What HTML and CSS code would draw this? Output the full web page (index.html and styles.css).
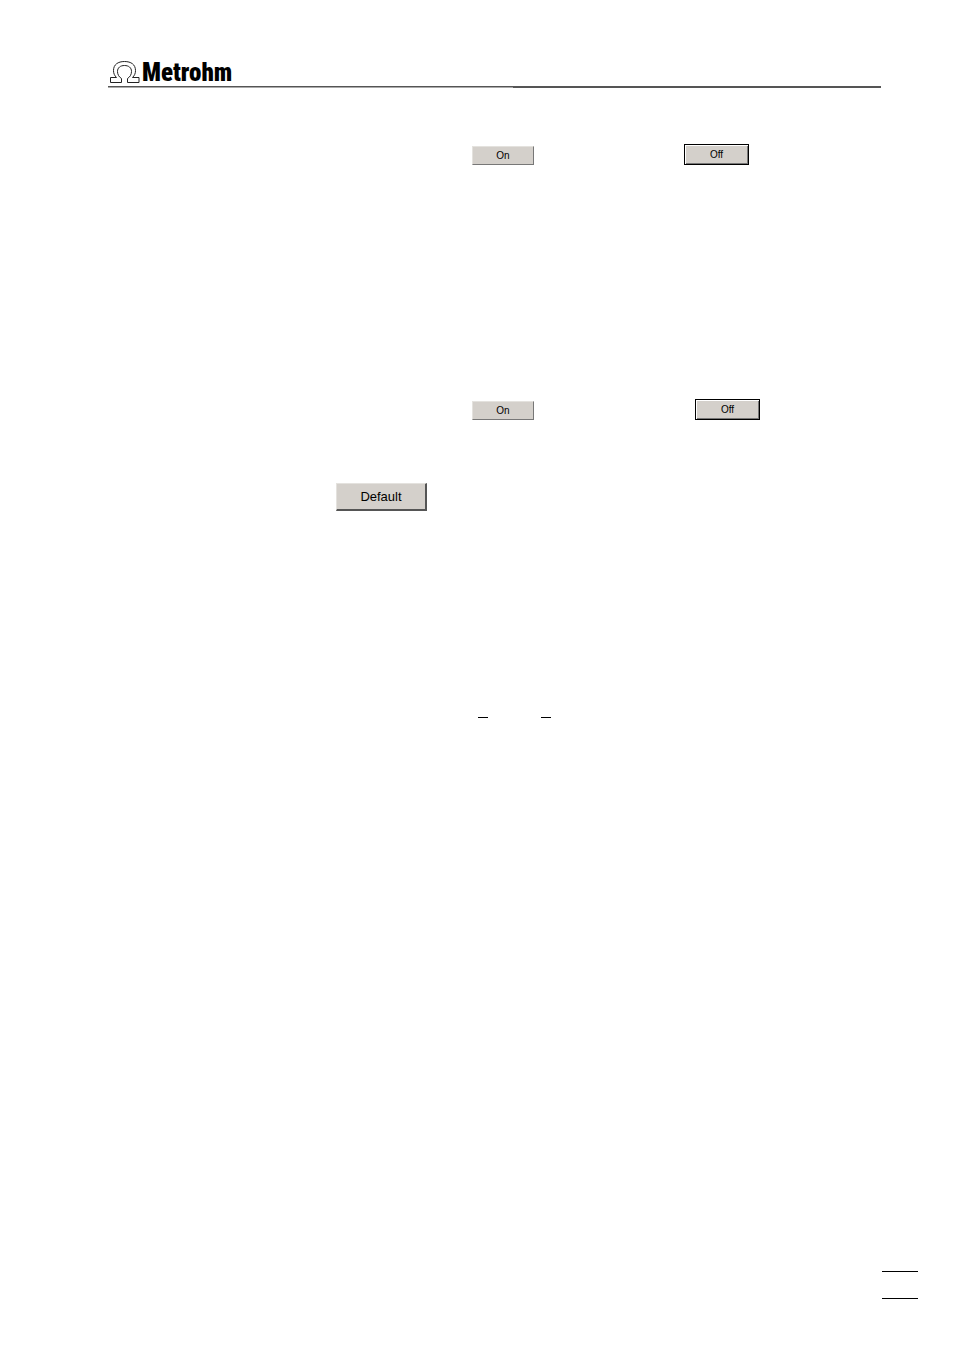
FILE: index.html
```html
<!DOCTYPE html>
<html lang="en">
<head>
    <meta charset="UTF-8">
    <meta name="viewport" content="width=device-width, initial-scale=1.0">
    <title>Metrohm</title>
    <link rel="stylesheet" href="styles.css">
</head>
<body>
    <div class="page">
      <header class="head">
        <div class="logo">
          <svg class="omega" width="32" height="24" viewBox="0 0 32 24" aria-hidden="true">
            <path d="M2.5 22.5V17.5H8.5C6.5 15.5 5.500 13.500 5.500 10.500C5.500 4.500 10 1.500 16.500 1.500S27.500 4.500 27.500 10.500C27.500 13.500 26.500 15.500 24.500 17.500H31V22.500H19.500V18.500C22 17 23.500 14.500 23.500 11.500C23.500 7.500 20.500 5.500 16.500 5.500S9.500 7.500 9.500 11.500C9.500 14.500 11 17 13.500 18.500V22.500Z" />
          </svg>
          <span class="brand">Metrohm</span>
        </div>
        <div class="rule"><span></span><span></span></div>
      </header>

      <main class="content">
        <div class="switch first">
          <button type="button" class="btn">On</button>
          <button type="button" class="btn focused">Off</button>
        </div>
        <div class="switch second">
          <button type="button" class="btn">On</button>
          <button type="button" class="btn focused">Off</button>
        </div>
        <button type="button" class="btn default">Default</button>
        <div class="marks">
          <span class="mark"></span>
          <span class="mark"></span>
        </div>
      </main>

      <footer class="foot">
        <div class="page-number"></div>
      </footer>
    </div>
</body>
</html>
```

FILE: styles.css
```css
* {
  box-sizing: border-box;
}
body {
  margin: 0;
  background: white;
  color: black;
  font-family: "Liberation Sans", Arial, sans-serif;
}
.page {
  min-height: 100vh;
  display: flex;
  flex-direction: column;
}
.head {
  padding: 60px 73px 0 108px;
}
.logo {
  display: flex;
  height: 26px;
}
.omega {
  fill: white;
  stroke: #222;
  stroke-width: 1;
}
.brand {
  margin-left: 2px;
  font-family: "Roboto Condensed", Roboto, sans-serif;
  font-size: 25px;
  line-height: 26px;
  font-weight: 900;
}
.rule {
  display: flex;
  height: 2px;
}
.rule span {
  flex: 10;
  background: #555;
}
.rule span:first-child {
  flex: 11;
  border-bottom: 1px solid #aaa;
}
.content {
  flex: 1;
  padding-left: 336px;
}
.switch {
  display: flex;
  align-items: flex-end;
  gap: 150px;
  padding-left: 136px;
}
.first {
  margin-top: 56px;
}
.second {
  gap: 161px;
  margin-top: 234px;
}
.btn {
  display: block;
  width: 62px;
  height: 19px;
  padding: 0;
  border: 1px solid;
  border-color: #e4e2de #777 #777 #e4e2de;
  border-radius: 0;
  background: #d4d0cb;
  color: black;
  font-family: "Liberation Sans", Arial, sans-serif;
  font-size: 10px;
  line-height: 16px;
}
.focused {
  width: 65px;
  height: 21px;
  border-color: black;
  box-shadow: inset 1px 1px white, inset -1px -1px #777;
}
.default {
  width: 91px;
  height: 28px;
  margin-top: 63px;
  border-width: 1px 2px 2px 1px;
  border-color: #e4e2de #555 #555 #e4e2de;
  font-size: 13px;
  line-height: 24px;
}
.marks {
  display: flex;
  gap: 53px;
  margin-top: 206px;
  padding-left: 142px;
}
.mark {
  width: 10px;
  height: 1px;
  background: black;
}
.foot {
  display: flex;
  justify-content: flex-end;
  padding: 0 36px 51px;
}
.page-number {
  width: 36px;
  height: 28px;
  border: solid black;
  border-width: 1px 0;
}
```
